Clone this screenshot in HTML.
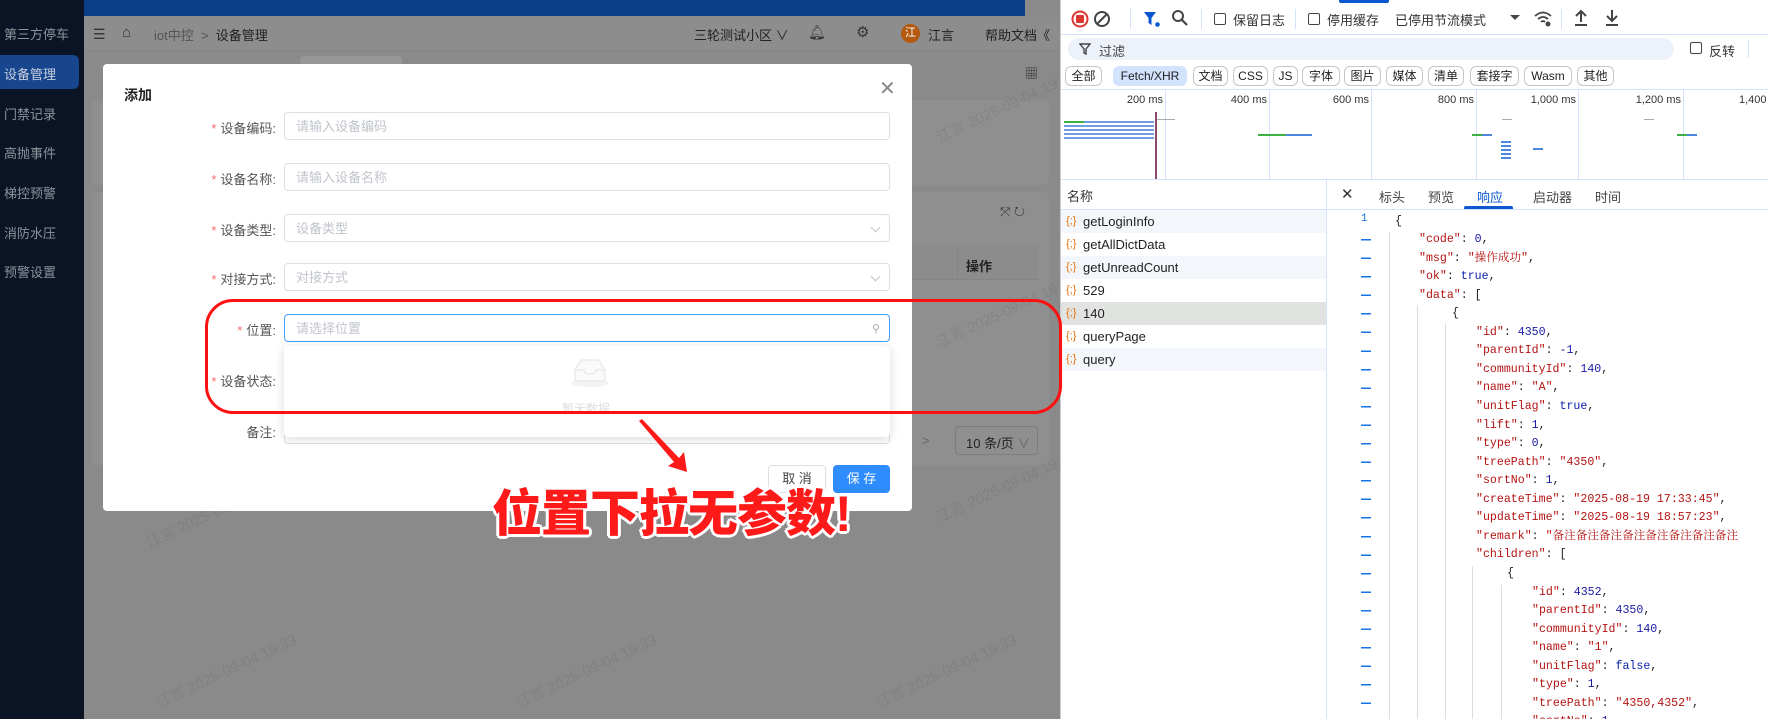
<!DOCTYPE html>
<html style="overflow:hidden;width:1768px;height:719px"><head><meta charset="utf-8">
<style>
*{box-sizing:border-box;margin:0;padding:0}
body{width:1768px;height:719px;overflow:hidden;position:relative;font-family:"Liberation Sans","Noto Sans CJK SC",sans-serif;background:#8a8a8a}
.a{position:absolute;white-space:nowrap}
.side{left:0;top:0;width:84px;height:719px;background:#0a1424}
.side .it{position:absolute;left:4px;font-size:13px;color:#8d939c}
.wm{position:absolute;font-size:15px;color:rgba(0,0,0,0.07);transform:rotate(-25deg);white-space:nowrap}
.lbl{position:absolute;right:0;font-size:13px;color:#555;text-align:right}
.inp{position:absolute;left:284px;width:606px;height:28px;border:1px solid #dcdfe6;border-radius:4px;background:#fff;font-size:13px;color:#c0c4cc;padding-left:11px;line-height:28px}
.car{position:absolute;right:10px;top:9px;width:7px;height:7px;border-right:1px solid #c0c4cc;border-bottom:1px solid #c0c4cc;transform:rotate(45deg)}
.star{color:#f56c6c;margin-right:4px}
.dt{position:absolute;left:1060px;top:0;width:708px;height:719px;background:#fff;border-left:1px solid #ccc;font-size:12px;color:#1f1f1f;overflow:hidden}
.chip{position:absolute;top:66px;height:20px;border:1px solid #c4c7c5;border-radius:6px;font-size:12px;line-height:18px;text-align:center;color:#1f1f1f}
.row{position:absolute;left:0;width:265px;height:23px;font-size:13px;line-height:23px;padding-left:22px;color:#1f1f1f}
.row i{position:absolute;left:5px;top:0;font-style:normal;color:#e8710a;font-size:11px}
.tl{position:absolute;top:90px;height:89px;width:1px;background:#d3e3fd}
.tlab{position:absolute;top:94px;font-size:11px;color:#333;text-align:right}
.jl{position:absolute;font-family:"Liberation Mono","Noto Serif CJK SC",monospace;font-size:11.6px;white-space:nowrap;height:18px;line-height:18px}
.k{color:#b31412}.n{color:#1a1aa6}.b{color:#0d22aa}.s{color:#b31412}
.ln{position:absolute;left:298px;font-family:"Liberation Mono",monospace;font-size:11px;color:#1a73e8}
.gl{position:absolute;width:1px;background:#dadce0}
</style></head><body>

<div class="a side">
<div class="it" style="top:24px">第三方停车</div>
<div style="position:absolute;left:0;top:55px;width:79px;height:34px;background:#17468f;border-radius:0 6px 6px 0"></div>
<div class="it" style="top:64px;color:#c7cfdc">设备管理</div>
<div class="it" style="top:104px">门禁记录</div>
<div class="it" style="top:143px">高抛事件</div>
<div class="it" style="top:183px">梯控预警</div>
<div class="it" style="top:223px">消防水压</div>
<div class="it" style="top:262px">预警设置</div>
</div>

<div class="a" style="left:84px;top:0;width:941px;height:16px;background:#0d3f88"></div>

<div class="a" style="left:84px;top:16px;width:976px;height:35px;background:#8d8d8d;border-bottom:1px solid #858585"></div>
<div class="a" style="left:93px;top:26px;font-size:14px;color:#333">☰</div>
<div class="a" style="left:122px;top:24px;font-size:15px;color:#333">⌂</div>
<div class="a" style="left:154px;top:25px;font-size:13px;color:#555">iot中控 &nbsp;&gt;&nbsp; <span style="color:#222">设备管理</span></div>
<div class="a" style="left:694px;top:25px;font-size:13px;color:#222">三轮测试小区 ∨</div>
<div class="a" style="left:808px;top:24px;font-size:14px;color:#333">🔔︎</div>
<div class="a" style="left:856px;top:23px;font-size:15px;color:#333">⚙</div>
<div class="a" style="left:901px;top:24px;width:19px;height:19px;border-radius:50%;background:#b35a10;color:#fff;font-size:11px;text-align:center;line-height:19px">江</div>
<div class="a" style="left:928px;top:25px;font-size:13px;color:#222">江言</div>
<div class="a" style="left:985px;top:25px;font-size:13px;color:#222">帮助文档《</div>
<div class="a" style="left:300px;top:56px;width:102px;height:10px;background:#979797;border-radius:4px"></div>
<div class="a" style="left:1025px;top:63px;font-size:13px;color:#333">▦</div>

<div class="a" style="left:92px;top:100px;width:957px;height:85px;background:#8f8f8f;border-radius:6px"></div>
<div class="a" style="left:92px;top:192px;width:957px;height:273px;background:#8f8f8f;border-radius:6px"></div>
<div class="a" style="left:1000px;top:204px;font-size:13px;color:#333">⤧ ↻</div>
<div class="a" style="left:912px;top:245px;width:126px;height:35px;background:#8c8c8c;border-bottom:1px solid #858585"></div>
<div class="a" style="left:957px;top:245px;width:1px;height:35px;background:#858585"></div>
<div class="a" style="left:966px;top:256px;font-size:13px;font-weight:bold;color:#222">操作</div>
<div class="a" style="left:922px;top:433px;font-size:13px;color:#666">&gt;</div>
<div class="a" style="left:955px;top:426px;width:83px;height:29px;border:1px solid #7d7d7d;border-radius:4px;font-size:13px;color:#222;padding:6px 0 0 10px">10 条/页 <span style="color:#666">∨</span></div>

<div class="wm" style="left:930px;top:95px">江言 2025-09-04 19:33</div>
<div class="wm" style="left:930px;top:300px">江言 2025-09-04 19:33</div>
<div class="wm" style="left:930px;top:475px">江言 2025-09-04 19:33</div>
<div class="wm" style="left:140px;top:500px">江言 2025-09-04 19:33</div>
<div class="wm" style="left:150px;top:660px">江言 2025-09-04 19:33</div>
<div class="wm" style="left:510px;top:660px">江言 2025-09-04 19:33</div>
<div class="wm" style="left:870px;top:660px">江言 2025-09-04 19:33</div>

<div class="a" style="left:103px;top:64px;width:809px;height:447px;background:#fff;border-radius:4px"></div>
<div class="a" style="left:124px;top:85px;font-size:14px;font-weight:bold;color:#222">添加</div>
<div class="a" style="left:879px;top:76px;font-size:20px;color:#888;font-weight:300">✕</div>

<div class="a" style="left:180px;top:0;width:96px;height:719px">
<div class="lbl" style="top:118px"><span class="star">*</span>设备编码:</div>
<div class="lbl" style="top:169px"><span class="star">*</span>设备名称:</div>
<div class="lbl" style="top:220px"><span class="star">*</span>设备类型:</div>
<div class="lbl" style="top:269px"><span class="star">*</span>对接方式:</div>
<div class="lbl" style="top:320px"><span class="star">*</span>位置:</div>
<div class="lbl" style="top:371px"><span class="star">*</span>设备状态:</div>
<div class="lbl" style="top:422px">备注:</div>
</div>
<div class="inp" style="top:112px">请输入设备编码</div>
<div class="inp" style="top:163px">请输入设备名称</div>
<div class="inp" style="top:214px">设备类型<span class="car"></span></div>
<div class="inp" style="top:263px">对接方式<span class="car"></span></div>
<div class="inp" style="top:314px;border-color:#409eff">请选择位置<span style="position:absolute;right:9px;top:0;font-size:11px;color:#aaa">⚲</span></div>
<div class="inp" style="top:416px"></div>
<div class="a" style="left:284px;top:346px;width:606px;height:91px;background:#fff;border-radius:4px;box-shadow:0 2px 10px rgba(0,0,0,0.15)"></div>
<svg class="a" style="left:569px;top:356px" width="42" height="32" viewBox="0 0 42 32"><ellipse cx="21" cy="27" rx="19" ry="4" fill="#f3f3f3"/><path d="M6 14 L12 4 H30 L36 14 V25 H6 Z" fill="#fafafa" stroke="#e3e3e3"/><path d="M6 14 H15 Q15 18 21 18 Q27 18 27 14 H36" fill="none" stroke="#e3e3e3"/></svg>
<div class="a" style="left:562px;top:400px;font-size:12px;color:#ddd">暂无数据</div>
<div class="a" style="left:768px;top:465px;width:58px;height:28px;border:1px solid #dcdfe6;border-radius:4px;font-size:13px;color:#444;text-align:center;line-height:26px">取 消</div>
<div class="a" style="left:833px;top:465px;width:57px;height:28px;background:#2f8cff;border-radius:4px;font-size:13px;color:#fff;text-align:center;line-height:28px">保 存</div>

<div class="dt">
<div class="a" style="left:278px;top:0;width:50px;height:3px;background:#0b57d0;border-radius:0 0 2px 2px"></div>
<div class="a" style="left:0;top:34px;width:708px;height:1px;background:#d3e3fd"></div>
<svg class="a" style="left:10px;top:10px" width="18" height="18"><circle cx="9" cy="9" r="7.5" fill="none" stroke="#dc362e" stroke-width="2"/><rect x="5" y="5" width="8" height="8" rx="1" fill="#dc362e"/></svg>
<svg class="a" style="left:32px;top:10px" width="18" height="18"><circle cx="9" cy="9" r="7" fill="none" stroke="#444" stroke-width="2"/><line x1="4" y1="14" x2="14" y2="4" stroke="#444" stroke-width="2"/></svg>
<div class="a" style="left:69px;top:9px;width:1px;height:20px;background:#d3e3fd"></div>
<svg class="a" style="left:82px;top:10px" width="18" height="18"><path d="M1 2 H13 L8.5 8 V15 L5.5 13 V8 Z" fill="#0b57d0"/><circle cx="14.5" cy="14.5" r="2.3" fill="#0b57d0"/></svg>
<svg class="a" style="left:110px;top:9px" width="18" height="18"><circle cx="7" cy="7" r="5" fill="none" stroke="#444" stroke-width="2"/><line x1="11" y1="11" x2="16" y2="16" stroke="#444" stroke-width="2.2"/></svg>
<div class="a" style="left:140px;top:9px;width:1px;height:20px;background:#d3e3fd"></div>
<div class="a" style="left:153px;top:13px;width:12px;height:12px;border:1.5px solid #444;border-radius:2px"></div>
<div class="a" style="left:172px;top:10px;font-size:13px;color:#333">保留日志</div>
<div class="a" style="left:234px;top:9px;width:1px;height:20px;background:#d3e3fd"></div>
<div class="a" style="left:247px;top:13px;width:12px;height:12px;border:1.5px solid #444;border-radius:2px"></div>
<div class="a" style="left:266px;top:10px;font-size:13px;color:#333">停用缓存</div>
<div class="a" style="left:334px;top:10px;font-size:13px;color:#333">已停用节流模式</div>
<div class="a" style="left:449px;top:15px;width:0;height:0;border-left:5px solid transparent;border-right:5px solid transparent;border-top:5px solid #444"></div>
<svg class="a" style="left:472px;top:9px" width="20" height="18"><path d="M2 7 Q10 0 18 7 M5 10 Q10 6 15 10 M8 13 Q10 11 12 13" fill="none" stroke="#444" stroke-width="1.8"/><circle cx="15" cy="15" r="2.5" fill="#444"/></svg>
<div class="a" style="left:500px;top:9px;width:1px;height:20px;background:#d3e3fd"></div>
<svg class="a" style="left:512px;top:9px" width="16" height="18"><path d="M8 2 V13 M3 7 L8 2 L13 7 M2 16 H14" fill="none" stroke="#444" stroke-width="2"/></svg>
<svg class="a" style="left:543px;top:9px" width="16" height="18"><path d="M8 1 V12 M3 7 L8 12 L13 7 M2 16 H14" fill="none" stroke="#444" stroke-width="2"/></svg>

<div class="a" style="left:7px;top:38px;width:606px;height:22px;background:#edf1f9;border-radius:11px"></div>
<svg class="a" style="left:18px;top:43px" width="12" height="12"><path d="M1 1 H11 L7 6 V11 L5 10 V6 Z" fill="none" stroke="#444" stroke-width="1.4"/></svg>
<div class="a" style="left:38px;top:41px;font-size:13px;color:#444">过滤</div>
<div class="a" style="left:629px;top:42px;width:12px;height:12px;border:1.5px solid #444;border-radius:2px"></div>
<div class="a" style="left:648px;top:41px;font-size:13px;color:#333">反转</div>
<div class="a" style="left:687px;top:40px;width:1px;height:18px;background:#d3e3fd"></div>

<div class="chip" style="left:4px;width:37px">全部</div>
<div class="chip" style="left:52px;width:74px;background:#d3e3fd;border-color:#d3e3fd">Fetch/XHR</div>
<div class="chip" style="left:132px;width:35px">文档</div>
<div class="chip" style="left:172px;width:35px">CSS</div>
<div class="chip" style="left:212px;width:25px">JS</div>
<div class="chip" style="left:241px;width:38px">字体</div>
<div class="chip" style="left:283px;width:37px">图片</div>
<div class="chip" style="left:325px;width:37px">媒体</div>
<div class="chip" style="left:367px;width:36px">清单</div>
<div class="chip" style="left:409px;width:49px">套接字</div>
<div class="chip" style="left:463px;width:48px">Wasm</div>
<div class="chip" style="left:516px;width:37px">其他</div>

<div class="a" style="left:0;top:89px;width:708px;height:1px;background:#d3e3fd"></div>
<div class="tl" style="left:104px"></div><div class="tl" style="left:208px"></div><div class="tl" style="left:310px"></div><div class="tl" style="left:415px"></div><div class="tl" style="left:517px"></div><div class="tl" style="left:622px"></div>
<div class="tlab" style="left:60px;width:42px">200 ms</div>
<div class="tlab" style="left:160px;width:46px">400 ms</div>
<div class="tlab" style="left:262px;width:46px">600 ms</div>
<div class="tlab" style="left:367px;width:46px">800 ms</div>
<div class="tlab" style="left:455px;width:60px">1,000 ms</div>
<div class="tlab" style="left:560px;width:60px">1,200 ms</div>
<div class="tlab" style="left:678px;width:40px;text-align:left">1,400</div>
<div class="a" style="left:94px;top:112px;width:2px;height:67px;background:#8a4a6a"></div>
<div class="a" style="left:3px;top:121px;width:90px;height:18px;background:repeating-linear-gradient(#4f86e0 0 2px,transparent 2px 4px);opacity:.8"></div>
<div class="a" style="left:3px;top:121px;width:20px;height:2px;background:#3cb043"></div>
<div class="a" style="left:96px;top:119px;width:18px;height:1px;background:#aaa"></div>
<div class="a" style="left:197px;top:134px;width:28px;height:2px;background:#3cb043"></div>
<div class="a" style="left:225px;top:134px;width:26px;height:2px;background:#4f86e0"></div>
<div class="a" style="left:441px;top:119px;width:10px;height:1px;background:#aaa"></div>
<div class="a" style="left:411px;top:134px;width:10px;height:2px;background:#3cb043"></div><div class="a" style="left:421px;top:134px;width:10px;height:2px;background:#4f86e0"></div>
<div class="a" style="left:440px;top:141px;width:10px;height:19px;background:repeating-linear-gradient(#4f86e0 0 2px,transparent 2px 4px)"></div>
<div class="a" style="left:472px;top:148px;width:10px;height:2px;background:#4f86e0"></div>
<div class="a" style="left:583px;top:119px;width:10px;height:1px;background:#aaa"></div>
<div class="a" style="left:616px;top:134px;width:10px;height:2px;background:#3cb043"></div><div class="a" style="left:626px;top:134px;width:10px;height:2px;background:#4f86e0"></div>

<div class="a" style="left:0;top:179px;width:708px;height:1px;background:#d3e3fd"></div>
<div class="a" style="left:6px;top:186px;font-size:13px;color:#333">名称</div>
<div class="a" style="left:0;top:209px;width:265px;height:1px;background:#d3e3fd"></div>
<div class="a" style="left:265px;top:180px;width:1px;height:539px;background:#d3e3fd"></div>
<div class="row" style="top:210px;background:#f3f6fb"><i>{;}</i>getLoginInfo</div>
<div class="row" style="top:233px"><i>{;}</i>getAllDictData</div>
<div class="row" style="top:256px;background:#f3f6fb"><i>{;}</i>getUnreadCount</div>
<div class="row" style="top:279px"><i>{;}</i>529</div>
<div class="row" style="top:302px;background:#e1e3e1"><i>{;}</i>140</div>
<div class="row" style="top:325px"><i>{;}</i>queryPage</div>
<div class="row" style="top:348px;background:#f3f6fb"><i>{;}</i>query</div>

<div class="a" style="left:280px;top:185px;font-size:15px;color:#333">✕</div>
<div class="a" style="left:318px;top:187px;font-size:13px;color:#444">标头</div>
<div class="a" style="left:367px;top:187px;font-size:13px;color:#444">预览</div>
<div class="a" style="left:416px;top:187px;font-size:13px;color:#0b57d0">响应</div>
<div class="a" style="left:403px;top:206px;width:49px;height:3px;background:#0b57d0;border-radius:2px 2px 0 0"></div>
<div class="a" style="left:472px;top:187px;font-size:13px;color:#444">启动器</div>
<div class="a" style="left:534px;top:187px;font-size:13px;color:#444">时间</div>
<div class="a" style="left:266px;top:209px;width:442px;height:1px;background:#d3e3fd"></div>

<div class="gl" style="left:328px;top:232px;height:487px"></div>
<div class="gl" style="left:356px;top:305px;height:414px"></div>
<div class="gl" style="left:384px;top:323px;height:396px"></div>
<div class="gl" style="left:411px;top:566px;height:153px"></div>
<div class="gl" style="left:440px;top:585px;height:134px"></div>

<div class="ln" style="top:213px;left:300px">1</div>
<div class="jl" style="left:334px;top:213px">{</div>
<div class="jl" style="left:358px;top:231px"><span class="k">"code"</span>: <span class="n">0</span>,</div>
<div class="jl" style="left:358px;top:250px"><span class="k">"msg"</span>: <span class="s">"操作成功"</span>,</div>
<div class="jl" style="left:358px;top:268px"><span class="k">"ok"</span>: <span class="b">true</span>,</div>
<div class="jl" style="left:358px;top:287px"><span class="k">"data"</span>: [</div>
<div class="jl" style="left:391px;top:305px">{</div>
<div class="jl" style="left:415px;top:324px"><span class="k">"id"</span>: <span class="n">4350</span>,</div>
<div class="jl" style="left:415px;top:342px"><span class="k">"parentId"</span>: <span class="n">-1</span>,</div>
<div class="jl" style="left:415px;top:361px"><span class="k">"communityId"</span>: <span class="n">140</span>,</div>
<div class="jl" style="left:415px;top:379px"><span class="k">"name"</span>: <span class="s">"A"</span>,</div>
<div class="jl" style="left:415px;top:398px"><span class="k">"unitFlag"</span>: <span class="b">true</span>,</div>
<div class="jl" style="left:415px;top:417px"><span class="k">"lift"</span>: <span class="n">1</span>,</div>
<div class="jl" style="left:415px;top:435px"><span class="k">"type"</span>: <span class="n">0</span>,</div>
<div class="jl" style="left:415px;top:454px"><span class="k">"treePath"</span>: <span class="s">"4350"</span>,</div>
<div class="jl" style="left:415px;top:472px"><span class="k">"sortNo"</span>: <span class="n">1</span>,</div>
<div class="jl" style="left:415px;top:491px"><span class="k">"createTime"</span>: <span class="s">"2025-08-19 17:33:45"</span>,</div>
<div class="jl" style="left:415px;top:509px"><span class="k">"updateTime"</span>: <span class="s">"2025-08-19 18:57:23"</span>,</div>
<div class="jl" style="left:415px;top:528px"><span class="k">"remark"</span>: <span class="s">"备注备注备注备注备注备注备注备注</span></div>
<div class="jl" style="left:415px;top:546px"><span class="k">"children"</span>: [</div>
<div class="jl" style="left:446px;top:565px">{</div>
<div class="jl" style="left:471px;top:584px"><span class="k">"id"</span>: <span class="n">4352</span>,</div>
<div class="jl" style="left:471px;top:602px"><span class="k">"parentId"</span>: <span class="n">4350</span>,</div>
<div class="jl" style="left:471px;top:621px"><span class="k">"communityId"</span>: <span class="n">140</span>,</div>
<div class="jl" style="left:471px;top:639px"><span class="k">"name"</span>: <span class="s">"1"</span>,</div>
<div class="jl" style="left:471px;top:658px"><span class="k">"unitFlag"</span>: <span class="b">false</span>,</div>
<div class="jl" style="left:471px;top:676px"><span class="k">"type"</span>: <span class="n">1</span>,</div>
<div class="jl" style="left:471px;top:695px"><span class="k">"treePath"</span>: <span class="s">"4350,4352"</span>,</div>
<div class="jl" style="left:471px;top:713px"><span class="k">"sortNo"</span>: <span class="n">1</span>,</div>
<div style="position:absolute;left:300px;top:231px;width:10px;height:488px;background:repeating-linear-gradient(transparent 0 8px,#1a73e8 8px 9.5px,transparent 9.5px 18.55px)"></div>
</div>

<div class="a" style="left:205px;top:299px;width:857px;height:115px;border:3px solid #ff1010;border-radius:28px"></div>
<svg class="a" style="left:630px;top:415px" width="70" height="70" viewBox="0 0 70 70"><path d="M9 6 L12 4 L49 43 L54 37 L57 57 L38 51 L44 47 Z" fill="#ff1a1a"/></svg>
<div class="a" style="left:492px;top:474px;font-size:50px;font-weight:900;color:#ff1a1a;letter-spacing:-1px;text-shadow:2px 2px 0 #fff,-2px -2px 0 #fff,2px -2px 0 #fff,-2px 2px 0 #fff,0 3px 0 #fff,3px 0 0 #fff,0 -3px 0 #fff,-3px 0 0 #fff">位置下拉无参数!</div>
</body></html>
